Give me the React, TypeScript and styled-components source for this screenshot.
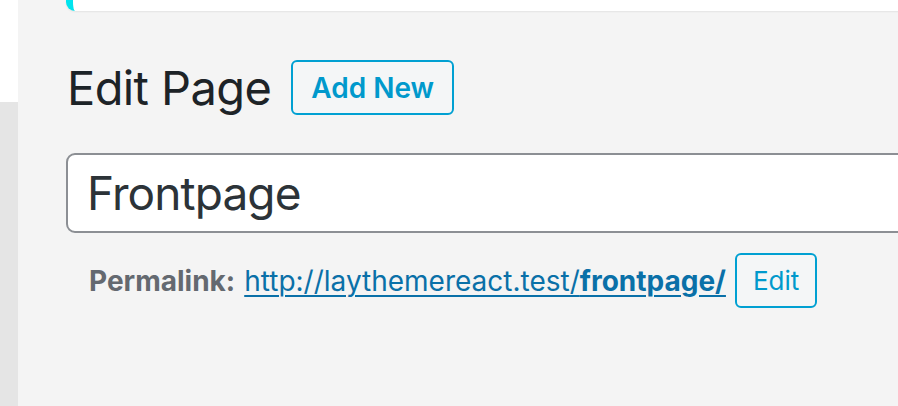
import React from "react";
import styled, { createGlobalStyle } from "styled-components";

const GlobalStyle = createGlobalStyle`
    html, body {
        margin: 0;
        padding: 0;
        height: 100%;
        overflow: hidden;
    }

    body {
        font-family: Inter, "Noto Sans", sans-serif;
        background: #f4f4f4;
    }
`;

const Page = styled.div`
    display: flex;
    height: 406px;
`;

const Strip = styled.div`
    width: 18px;
    display: flex;
    flex-direction: column;
`;

const StripTop = styled.div`
    height: 102px;
    background: #ffffff;
`;

const StripBottom = styled.div`
    flex: 1;
    background: #e5e5e5;
`;

const Main = styled.div`
    flex: 1;
    background: #f4f4f4;
    padding-left: 48px;
    overflow: hidden;
`;

const Notice = styled.div`
    height: 11px;
    width: calc(100% + 20px);
    background: #ffffff;
    border-left: 7px solid #00e4ee;
    border-bottom-left-radius: 9px;
    box-shadow: 0 1px 2px rgba(0, 0, 0, 0.07);
    box-sizing: border-box;
`;

const HeaderRow = styled.div`
    display: flex;
    align-items: center;
    gap: 20px;
    margin-top: 49px;
    padding-left: 1px;
`;

const Title = styled.h1`
    margin: 0;
    font-size: 47px;
    font-weight: 400;
    letter-spacing: -0.6px;
    color: #1d2327;
    line-height: 55px;
`;

const OutlineButton = styled.button<{ $bold?: boolean }>`
    font-family: Inter, "Noto Sans", sans-serif;
    background: #f4f6f7;
    border: 2px solid #00a0d2;
    border-radius: 6px;
    color: #0099cc;
    cursor: pointer;
    box-sizing: border-box;
    font-size: ${(p) => (p.$bold ? "28px" : "26px")};
    font-weight: ${(p) => (p.$bold ? 600 : 400)};
    height: 55px;
    padding: 0 ${(p) => (p.$bold ? "18px" : "16px")};
`;

const TitleInput = styled.div`
    margin-top: 38px;
    height: 80px;
    width: calc(100% + 20px);
    box-sizing: border-box;
    background: #ffffff;
    border: 2px solid #8c8f94;
    border-radius: 9px;
    display: flex;
    align-items: center;
    padding-left: 19px;
    font-size: 46px;
    letter-spacing: -0.9px;
    color: #2c3338;
`;

const PermalinkRow = styled.div`
    display: flex;
    align-items: center;
    margin-top: 20px;
    padding-left: 23px;
    font-size: 28px;
`;

const PermalinkLabel = styled.strong`
    color: #646970;
    font-weight: 700;
    margin-right: 9px;
`;

const PermalinkLink = styled.a`
    color: #0a70a8;
    text-decoration: underline;
    text-underline-offset: 4px;
    text-decoration-thickness: 2px;
    margin-right: 9px;

    strong {
        font-weight: 700;
    }
`;

const App = () => {
    return (
        <>
            <GlobalStyle />
            <Page>
                <Strip>
                    <StripTop />
                    <StripBottom />
                </Strip>
                <Main>
                    <Notice />
                    <HeaderRow>
                        <Title>Edit Page</Title>
                        <OutlineButton $bold>Add New</OutlineButton>
                    </HeaderRow>
                    <TitleInput>Frontpage</TitleInput>
                    <PermalinkRow>
                        <PermalinkLabel>Permalink:</PermalinkLabel>
                        <PermalinkLink href="#">
                            http://laythemereact.test/<strong>frontpage/</strong>
                        </PermalinkLink>
                        <OutlineButton>Edit</OutlineButton>
                    </PermalinkRow>
                </Main>
            </Page>
        </>
    );
};

export default App;
